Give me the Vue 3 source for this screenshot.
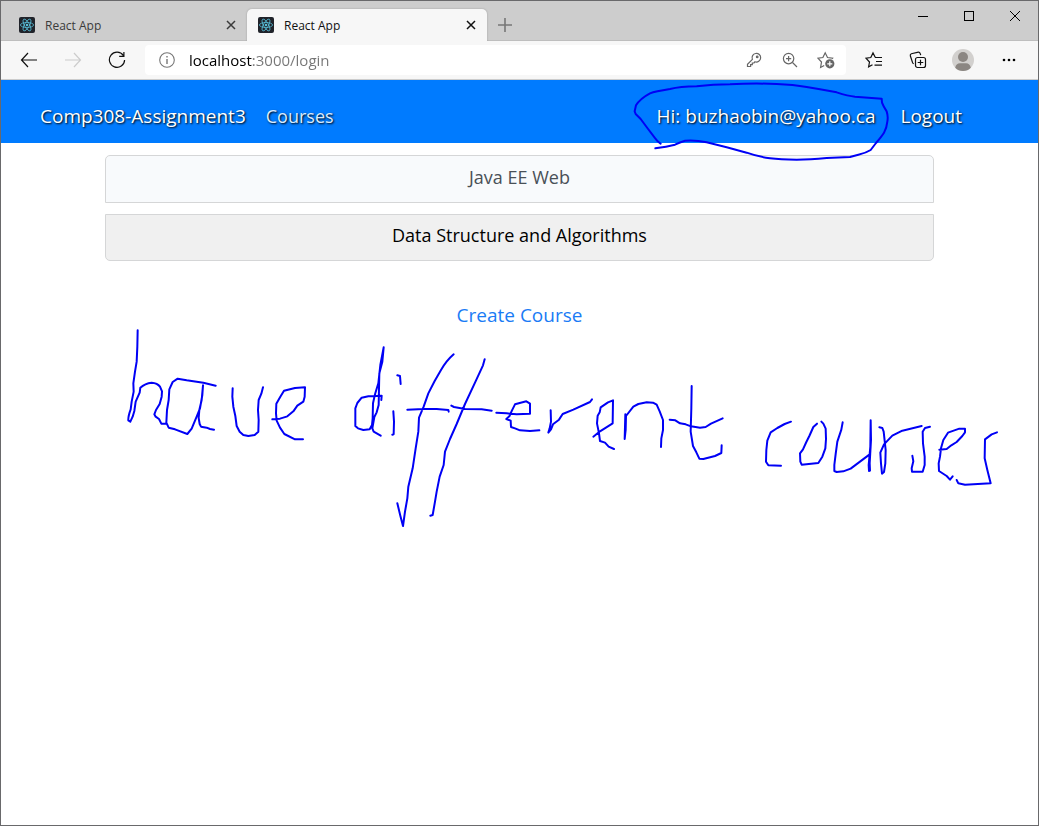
<script setup>
import { ref } from 'vue'

const address = ref('localhost:3000/login')
const tabs = [
  { id: 1, title: 'React App', active: false },
  { id: 2, title: 'React App', active: true },
]
const courses = [
  { name: 'Java EE Web', current: false },
  { name: 'Data Structure and Algorithms', current: true },
]

const ink = [
  {
    x: 620, y: 70,
    d: 'M122 221L113 214L104 203L82 174L62 147L47 132L44 124L48 106Q60 86 90 70Q105 64 150 57Q180 50 230 49Q280 43 330 43Q400 39 470 42Q520 44 560 51L600 58L650 67Q685 78 705 80L785 86L786 98Q790 109 800 124Q805 140 802 155Q800 175 792 188Q785 199 768 219L752 240Q738 249 715 254L690 261L620 264Q570 269 530 269Q480 269 450 265Q410 259 380 248L320 232L260 217Q225 209 195 212Q180 216 165 224Q140 230 106 235',
  },
  {
    x: 110, y: 320,
    d: 'M83 31L82 80L80 125L75 155L70 190L71 215L65 245L62 268Q54 290 55 301L61 305L68 290L73 273L77 245L89 218L91 203Q105 190 125 188Q142 189 150 200L156 214L155 230L149 252L138 270L133 283L137 290L147 297L154 311L168 311M317 197L280 188L230 181L203 176L188 186L178 208L176 240L171 270L169 308L176 323L195 328L232 342L245 326L260 290L270 265L277 225L279 196M279 196L275 240L268 270L266 294L269 312L273 320L290 323L300 327L312 329M368 205L367 230L370 260L376 288L380 318L389 335L400 345L415 348L434 345L445 335L446 300L444 270L446 240L454 221L459 202M487 298L510 296L532 289L550 274L562 257L580 245L584 230L585 202L555 204L522 212L511 230L499 251L498 280L500 302L510 323L523 342L555 358L579 358',
  },
  {
    x: 340, y: 335,
    d: 'M131 37L121 90L115 145L105 178L99 205L98 250L96 270L89 283L70 285L54 280L46 273L46 220L52 204L65 188L85 184L125 182L124 195M131 37L127 80L118 115L117 160L116 210L110 232L103 246L97 280L101 290L122 302M172 121L180 123L182 147M160 229L162 260L161 298L157 299M341 58Q320 76 303 105L284 138L265 175L251 215L237 248L235 290L227 340L218 400L205 455L202 490L195 530L189 573L181 542L172 505M202 224L250 222L290 222L325 225L326 230M434 73L429 91L405 143L375 207L350 267L330 312L315 350L311 390L299 425L290 470L285 500L278 540L271 542M334 212L342 216L375 222L425 223L455 227M469 233L500 235L530 238L570 236L570 206L559 199L525 208L516 226L508 244L499 252L512 257L513 276L525 280L540 286L570 288L598 286',
  },
  {
    x: 490, y: 370,
    d: 'M182 121L183 155L179 175L175 188L183 178L189 163L207 149L218 132L250 119L300 96L306 88M310 200L330 184L368 160L369 91L354 97L332 112L329 127L323 137L321 160L327 190L330 213L345 218L356 230L372 237M406 133L404 207L407 180L408 138L430 110L445 102L470 97L489 98L500 104L509 124L519 150L519 180L514 205L513 231M539 149L556 151L570 160L587 163L603 169L630 173L647 171L663 161L698 145M605 48L604 115L602 185L609 228L619 247L628 266L640 267L675 258L694 249L695 226',
  },
  {
    x: 750, y: 400,
    d: 'M123 65L104 72L82 84L62 97L52 122L49 150L48 185L55 196L93 197M201 71L190 81L178 108L169 126L159 148L150 160L151 185L155 194L205 189L217 170L226 145L228 117L227 86L220 71L214 65M278 67L274 89L262 125L257 162L253 195L253 213L260 216L280 214L302 206L330 185L359 163M362 61L361 140L356 195L357 213L360 212L359 190L363 120L362 61M388 82L397 84L401 95L407 150L406 190L402 216L396 221L393 190L391 158L402 133L427 107L457 92L515 78M540 80L525 84L518 95L519 130L524 170L524 195L518 215L486 215L485 205L490 184L487 167M568 149L590 147L604 136L620 126L637 108L645 97L645 86L628 86L594 98L580 120L573 145L570 170L566 190L567 213L590 228L600 239L608 229M620 240L625 250L645 254L722 250L712 210L704 175L705 118L725 103L741 97',
  },
]
</script>

<template>
  <div class="window">
    <header class="titlebar">
      <div class="tabs">
        <div v-for="tab in tabs" :key="tab.id" class="tab" :class="{ active: tab.active }">
          <svg class="favicon" viewBox="0 0 16 16" aria-hidden="true">
            <rect width="16" height="16" rx="2" fill="#20232a" />
            <g fill="none" stroke="#58bdd6" stroke-width="0.8">
              <ellipse cx="8" cy="8" rx="6.6" ry="2.5" />
              <ellipse cx="8" cy="8" rx="6.6" ry="2.5" transform="rotate(60 8 8)" />
              <ellipse cx="8" cy="8" rx="6.6" ry="2.5" transform="rotate(120 8 8)" />
            </g>
            <circle cx="8" cy="8" r="1.3" fill="#58bdd6" />
          </svg>
          <span class="tab-title">{{ tab.title }}</span>
          <button class="tab-close" type="button" aria-label="Close tab">
            <svg width="10" height="10" viewBox="0 0 10 10"><path d="M1 1L9 9M9 1L1 9" stroke="currentColor" stroke-width="1.5" /></svg>
          </button>
        </div>
        <button class="new-tab" type="button" aria-label="New tab">
          <svg width="14" height="14" viewBox="0 0 14 14"><path d="M7 0V14M0 7H14" stroke="#777" stroke-width="1.6" /></svg>
        </button>
      </div>
      <div class="controls">
        <button type="button" aria-label="Minimize">
          <svg width="12" height="12" viewBox="0 0 12 12"><path d="M1 6.5H11" stroke="#000" /></svg>
        </button>
        <button type="button" aria-label="Maximize">
          <svg width="12" height="12" viewBox="0 0 12 12"><rect x="1.5" y="1.5" width="9" height="9" fill="none" stroke="#000" /></svg>
        </button>
        <button type="button" aria-label="Close window">
          <svg width="12" height="12" viewBox="0 0 12 12"><path d="M1 1L11 11M11 1L1 11" stroke="#000" /></svg>
        </button>
      </div>
    </header>

    <div class="toolbar">
      <button class="tool" type="button" aria-label="Back">
        <svg width="18" height="18" viewBox="0 0 18 18"><path d="M8 2L1.5 9L8 16M1.5 9H17" /></svg>
      </button>
      <button class="tool" type="button" aria-label="Forward" disabled>
        <svg width="18" height="18" viewBox="0 0 18 18"><path d="M10 2L16.5 9L10 16M16.5 9H1" /></svg>
      </button>
      <button class="tool" type="button" aria-label="Refresh">
        <svg width="18" height="18" viewBox="0 0 18 18"><path d="M15.3 4.5A7.6 7.6 0 1 0 16.6 9M15.9 1V5.4H11.2" /></svg>
      </button>
      <div class="address">
        <svg class="info" width="16" height="16" viewBox="0 0 16 16" aria-hidden="true">
          <circle cx="8" cy="8" r="7.3" fill="none" stroke="#777" stroke-width="1.1" />
          <path d="M8 4V5.5M8 7V12" stroke="#777" stroke-width="1.4" />
        </svg>
        <input v-model="address" type="text" aria-label="Address" spellcheck="false" />
        <button class="tool small" type="button" aria-label="Passwords">
          <svg width="16" height="16" viewBox="0 0 16 16">
            <path d="M6.4 7.4L1.5 12.3V14.5H4.6V12.7H6.3V11H8L9 9.8A4.3 4.3 0 1 0 6.4 7.4Z" />
            <circle cx="11.2" cy="4.9" r="0.8" />
          </svg>
        </button>
        <button class="tool small" type="button" aria-label="Zoom">
          <svg width="16" height="16" viewBox="0 0 16 16">
            <circle cx="6.6" cy="6.6" r="5.2" /><path d="M10.5 10.5L15 15M6.6 4V9.2M4 6.6H9.2" />
          </svg>
        </button>
        <button class="tool small" type="button" aria-label="Add favorite">
          <svg width="18" height="18" viewBox="0 0 18 18">
            <path d="M7.2 14.4L3.6 16.4L4.5 11L0.9 7.2L5.9 6.5L8.2 1.8L10.5 6.5L15.6 7.2L15 7.9" />
            <circle class="solid" cx="12.8" cy="12.8" r="4.6" fill="#666" />
            <path d="M12.8 10.3V15.3M10.3 12.8H15.3" stroke="#fff" class="plus" />
          </svg>
        </button>
      </div>
      <button class="tool" type="button" aria-label="Favorites">
        <svg width="18" height="18" viewBox="0 0 18 18">
          <path d="M7.5 13.7L3.6 15.8L4.5 11L1 7.2L5.8 6.5L8 1.9L10.2 6.3M10 6.5H17M11 10.5H17M9.5 14.2H17" />
        </svg>
      </button>
      <button class="tool" type="button" aria-label="Collections">
        <svg width="18" height="18" viewBox="0 0 18 18">
          <rect x="6.5" y="6.5" width="10" height="10" rx="2" />
          <path d="M11.5 8.7V14.3M8.7 11.5H14.3M4.6 12.8L3.6 11.8L1.3 4.8Q1 3.3 2.4 2.7L9.3 1.1Q10.8 1 11.3 2.8L11.7 4.2" />
        </svg>
      </button>
      <button class="tool wide" type="button" aria-label="Profile">
        <svg class="avatar" width="22" height="22" viewBox="0 0 22 22">
          <circle cx="11" cy="11" r="11" fill="#d2d0ce" />
          <circle cx="11" cy="8" r="5" fill="#8b8682" />
          <path d="M3.2 18.7Q4 14.2 8 14.2H14Q18 14.2 18.8 18.7A11 11 0 0 1 3.2 18.7Z" fill="#8b8682" />
        </svg>
      </button>
      <button class="tool wide" type="button" aria-label="More">
        <svg width="16" height="16" viewBox="0 0 16 16">
          <g fill="#000" stroke="none"><circle cx="3" cy="8" r="1.3" /><circle cx="8" cy="8" r="1.3" /><circle cx="13" cy="8" r="1.3" /></g>
        </svg>
      </button>
    </div>

    <nav class="navbar">
      <a class="brand" href="#home">Comp308-Assignment3</a>
      <a class="muted" href="#courses">Courses</a>
      <span class="user">Hi: buzhaobin@yahoo.ca</span>
      <a href="#logout">Logout</a>
    </nav>

    <main>
      <div class="courses">
        <button v-for="course in courses" :key="course.name" type="button" class="course" :class="{ current: course.current }">
          {{ course.name }}
        </button>
      </div>
      <a class="create" href="#create">Create Course</a>
    </main>

    <svg class="ink" width="1039" height="560" viewBox="0 0 1039 560" role="img" aria-label="have different courses">
      <g v-for="part in ink" :key="part.d" :transform="`translate(${part.x} ${part.y}) scale(0.33333)`">
        <path :d="part.d" />
      </g>
    </svg>
  </div>
</template>

<style>
html, body { margin: 0; }
</style>

<style scoped>
.window {
  position: relative;
  box-sizing: border-box;
  min-height: 100vh;
  border: 1px solid #69696b;
  background: #fff;
  font-family: "Open Sans", "Noto Sans", sans-serif;
  color: #000;
  overflow: hidden;
}
button {
  display: flex;
  align-items: center;
  justify-content: center;
  padding: 0;
  border: 0;
  background: none;
  font: inherit;
  color: inherit;
}
a { text-decoration: none; }
.titlebar {
  display: flex;
  justify-content: space-between;
  height: 40px;
  background: #cdcdcd;
  box-shadow: inset 0 -1px #bebebe;
}
.tabs { display: flex; align-items: flex-end; }
.tab {
  display: flex;
  align-items: center;
  box-sizing: border-box;
  width: 240px;
  height: 32px;
  padding: 0 10px 0 11px;
  font-size: 12px;
  color: #3b3b3b;
}
.tab:first-child { width: 246px; padding-left: 18px; }
.tab.active {
  border-radius: 5px 5px 0 0;
  background: #f7f7f7;
  box-shadow: 0 0 2px #999;
  color: #111;
  clip-path: inset(-3px -3px 0 -3px);
}
.favicon { width: 16px; height: 16px; }
.tab-title { flex: 1; margin-left: 10px; }
.tab-close { width: 12px; height: 16px; }
.new-tab { width: 36px; height: 32px; }
.controls { display: flex; }
.controls button { width: 46px; height: 29px; }
.toolbar {
  display: flex;
  align-items: center;
  box-sizing: border-box;
  height: 39px;
  padding: 0 6px;
  border-bottom: 1px solid #ccc;
  background: #f7f7f7;
}
.tool { flex: none; width: 44px; height: 30px; color: #111; }
.tool.wide { width: 46px; }
.tool.small { width: 36px; color: #666; }
.tool:disabled { color: #ccc; }
.tool svg { fill: none; stroke: currentColor; stroke-width: 1.2; }
.tool svg.avatar, .tool svg .solid { stroke: none; }
.tool svg .plus { stroke: #fff; }
.address {
  display: flex;
  flex: 1;
  align-items: center;
  height: 30px;
  margin: 0 6px;
  padding: 0 2px 0 14px;
  border-radius: 4px;
  background: #fff;
}
.info { flex: none; }
.address input {
  flex: 1;
  min-width: 0;
  margin-left: 14px;
  padding: 0;
  border: 0;
  outline: 0;
  background: linear-gradient(90deg, #000 64px, #767676 64px);
  background-clip: text;
  color: transparent;
  font: 15px/24px "Open Sans", "Noto Sans", sans-serif;
}
.navbar {
  display: flex;
  align-items: center;
  padding: 22px 76px 13px 39px;
  background: #007bff;
  font-size: 19px;
  line-height: 28px;
  color: #fff;
  text-shadow: 1px 1px 2px #000;
}
.navbar a { color: #fff; }
.navbar .brand { margin-right: 20px; }
.navbar .muted { color: #d9ebff; font-size: 18px; }
.user { margin: 0 25px 0 auto; }
main {
  display: flex;
  flex-direction: column;
  align-items: center;
  padding-top: 12px;
}
.courses { display: flex; flex-direction: column; gap: 11px; width: 80%; }
.course {
  box-sizing: border-box;
  padding: 8px 20px 12px;
  border: 1px solid #d5d6d7;
  border-radius: 5px 5px 0 0;
  background: #f8fafc;
  font-size: 18px;
  line-height: 26px;
  color: #495057;
}
.course.current {
  padding-top: 7px;
  border-radius: 0 0 5px 5px;
  background: #f0f0f0;
  color: #000;
}
.create { margin-top: 40px; font-size: 19px; line-height: 28px; color: #1a7bf5; }
.ink {
  position: absolute;
  top: -1px;
  left: -1px;
  pointer-events: none;
  fill: none;
  stroke: #0000f5;
  stroke-width: 6;
  stroke-linecap: round;
  stroke-linejoin: round;
}
</style>
